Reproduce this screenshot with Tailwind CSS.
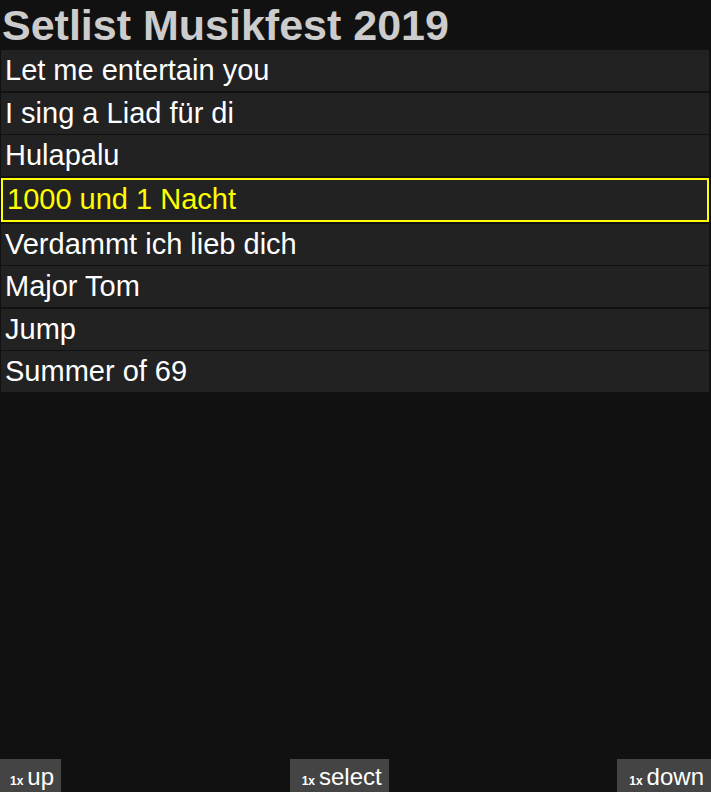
<!DOCTYPE html>
<html lang="de">
<head>
<meta charset="utf-8">
<meta name="viewport" content="width=device-width, initial-scale=1">
<title>Setlist Musikfest 2019</title>
<script src="https://cdn.jsdelivr.net/npm/@tailwindcss/browser@4"></script>
</head>
<body class="flex min-h-screen flex-col bg-[#111] font-['Liberation_Sans',Arial,sans-serif] text-white">
<main class="flex-1 px-px">
<h1 class="px-px text-[43px] leading-[50px] font-bold text-[#ccc]">Setlist Musikfest 2019</h1>
<ol class="pr-px text-[29px] leading-[41px]">
<li class="mb-0.5 bg-[#222] px-1">Let me entertain you</li>
<li class="mb-px bg-[#222] px-1">I sing a Liad für di</li>
<li class="mb-0.5 bg-[#222] px-1">Hulapalu</li>
<li class="mb-0.5 border-2 border-[#ff0] bg-[#222] px-1 pb-0.5 leading-[38px] text-[#ff0]" aria-current="true">1000 und 1 Nacht</li>
<li class="mb-px bg-[#222] px-1">Verdammt ich lieb dich</li>
<li class="mb-0.5 bg-[#222] px-1">Major Tom</li>
<li class="mb-px bg-[#222] px-1">Jump</li>
<li class="bg-[#222] px-1">Summer of 69</li>
</ol>
</main>
<footer class="flex items-end justify-between text-[24px] leading-[31px]">
<button type="button" class="flex items-baseline gap-1 bg-[#444] pt-0.5 pr-[7px] pl-2.5"><b class="text-[12px] leading-none">1x</b>up</button>
<button type="button" class="flex items-baseline gap-1 bg-[#444] pt-0.5 pr-[7px] pl-3"><b class="text-[12px] leading-none">1x</b>select</button>
<button type="button" class="flex items-baseline gap-1 bg-[#444] pt-0.5 pr-[7px] pl-3"><b class="text-[12px] leading-none">1x</b>down</button>
</footer>
</body>
</html>
